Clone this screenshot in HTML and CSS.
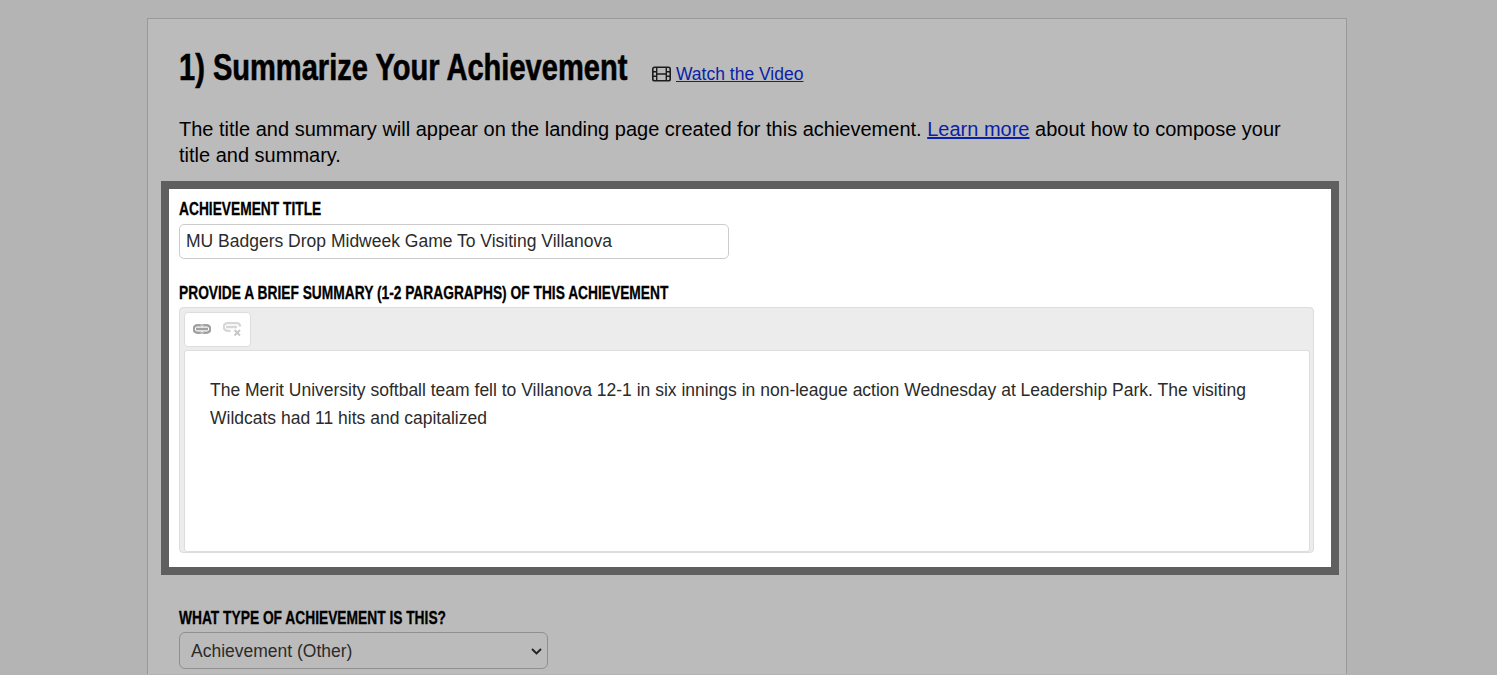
FILE: index.html
```html
<!DOCTYPE html>
<html lang="en">
<head>
<meta charset="utf-8">
<title>Summarize Your Achievement</title>
<link rel="stylesheet" href="styles.css">
</head>
<body>
<main class="card">
  <div class="heading-row">
    <h1 class="heading">1) Summarize Your Achievement</h1>
    <svg class="film" viewBox="0 0 19 16" width="19" height="16" aria-hidden="true">
      <rect x="0.8" y="1.3" width="17.4" height="13.4" rx="1.8" fill="none" stroke="#1c1c1c" stroke-width="1.6"/>
      <path d="M4.7 1.5V14.5M14.3 1.5V14.5M1 5.7H4.7M1 10.3H4.7M14.3 5.7H18M14.3 10.3H18M4.7 8H14.3" fill="none" stroke="#1c1c1c" stroke-width="1.4"/>
    </svg>
    <a class="link" href="#">Watch the Video</a>
  </div>
  <p class="intro">The title and summary will appear on the landing page created for this achievement. <a class="link-intro" href="#">Learn more</a> about how to compose your title and summary.</p>
  <section class="highlight">
    <label class="label">ACHIEVEMENT TITLE</label>
    <div class="input">MU Badgers Drop Midweek Game To Visiting Villanova</div>
    <label class="label label-summary">PROVIDE A BRIEF SUMMARY (1-2 PARAGRAPHS) OF THIS ACHIEVEMENT</label>
    <div class="editor">
      <div class="toolbar">
        <svg class="tool" viewBox="0 0 18 10" width="18" height="10" aria-hidden="true">
          <path d="M8 1.200H4.500a3.800 3.800 0 0 0 0 7.600H8M10 1.200h3.500a3.800 3.800 0 0 1 0 7.600H10" fill="none" stroke="#a0a0a0" stroke-width="2.400"/>
          <path d="M3 5H15" stroke="#a0a0a0" stroke-width="2.600"/>
          <path d="M7 1.200H11M7 8.800H11" stroke="#b4b4b4" stroke-width="2"/>
        </svg>
        <svg class="tool" viewBox="0 0 19 14" width="19" height="14" aria-hidden="true">
          <path d="M7.500 8.800H4.500a3.800 3.800 0 0 1 0-7.600h9a3.800 3.800 0 0 1 3.800 3.300M3 5H14" fill="none" stroke="#d6d6d6" stroke-width="2.300"/>
          <path d="M11.500 8L17 13.500M17 8L11.500 13.500" stroke="#c6c6c6" stroke-width="1.900"/>
        </svg>
      </div>
      <div class="editor-body">The Merit University softball team fell to Villanova 12-1 in six innings in non-league action Wednesday at Leadership Park. The visiting Wildcats had 11 hits and capitalized</div>
    </div>
  </section>
  <label class="label label-type">WHAT TYPE OF ACHIEVEMENT IS THIS?</label>
  <div class="select">
    <span>Achievement (Other)</span>
    <svg viewBox="0 0 11 7" width="11" height="7" aria-hidden="true"><path d="M1 1L5.500 5.500L10 1" fill="none" stroke="#222" stroke-width="1.900"/></svg>
  </div>
</main>
</body>
</html>
```
FILE: styles.css
```css
* { box-sizing: border-box; }
html, body { margin: 0; height: 675px; overflow: hidden; }
body {
  background: #b4b4b4;
  font-family: "Liberation Sans", Arial, sans-serif;
  color: #000;
}
.card {
  width: 1200px;
  height: 656px;
  margin: 18px 0 0 147px;
  padding: 0 31px;
  background: #bbb;
  border: 1px solid #999;
  border-bottom: 0;
  overflow: hidden;
}
.heading-row { display: flex; align-items: center; height: 97px; padding-top: 13px; }
.heading {
  flex: none;
  width: 555px;
  margin: -12px -82px 0 0;
  font-size: 36px;
  font-weight: 700;
  line-height: 44px;
  white-space: nowrap;
  -webkit-text-stroke: 0.6px #000;
  transform: scaleX(0.807);
  transform-origin: left center;
}
.film { flex: none; margin-right: 5px; }
.link { color: #0a1fa8; font-size: 17.5px; line-height: 24px; }
.intro { margin: 0; font-size: 20px; line-height: 26px; width: 1125px; height: 65px; color: #000; }
.link-intro { color: #0a1fa8; }
.highlight {
  width: 1178px;
  height: 394px;
  margin-left: -18px;
  padding: 10px 17px 0 10px;
  background: #fff;
  border: 8px solid #5f5f5f;
}
.label {
  display: block;
  font-size: 18px;
  font-weight: 700;
  line-height: 20px;
  white-space: nowrap;
  -webkit-text-stroke: 0.3px #000;
  transform: scaleX(0.765);
  transform-origin: left center;
}
.input {
  width: 550px;
  height: 35px;
  margin-top: 5px;
  padding: 0 6px;
  border: 1px solid #ccc;
  border-radius: 5px;
  font-size: 17.5px;
  line-height: 33px;
  color: #2b2b2b;
}
.label-summary { margin-top: 24px; }
.editor {
  height: 246px;
  margin-top: 4px;
  padding: 4px 3px 0 4px;
  background: #ececec;
  border: 1px solid #ddd;
  border-radius: 4px;
}
.toolbar {
  display: flex;
  align-items: center;
  gap: 12px;
  width: 67px;
  height: 35px;
  padding: 0 0 2px 8px;
  background: #fff;
  border: 1px solid #ddd;
  border-radius: 4px;
}
.tool { flex: none; }
.editor-body {
  height: 202px;
  margin-top: 3px;
  padding: 25px 25px 0;
  background: #fff;
  border: 1px solid #ddd;
  border-radius: 3px;
  font-size: 17.5px;
  line-height: 28px;
  color: #2b2b2b;
}
.label-type { margin-top: 33px; }
.select {
  display: flex;
  align-items: center;
  justify-content: space-between;
  width: 369px;
  height: 37px;
  margin-top: 4px;
  padding: 2px 5px 0 11px;
  border: 1px solid #8f8f8f;
  border-radius: 6px;
  font-size: 17.5px;
  color: #2b2b2b;
}
```
